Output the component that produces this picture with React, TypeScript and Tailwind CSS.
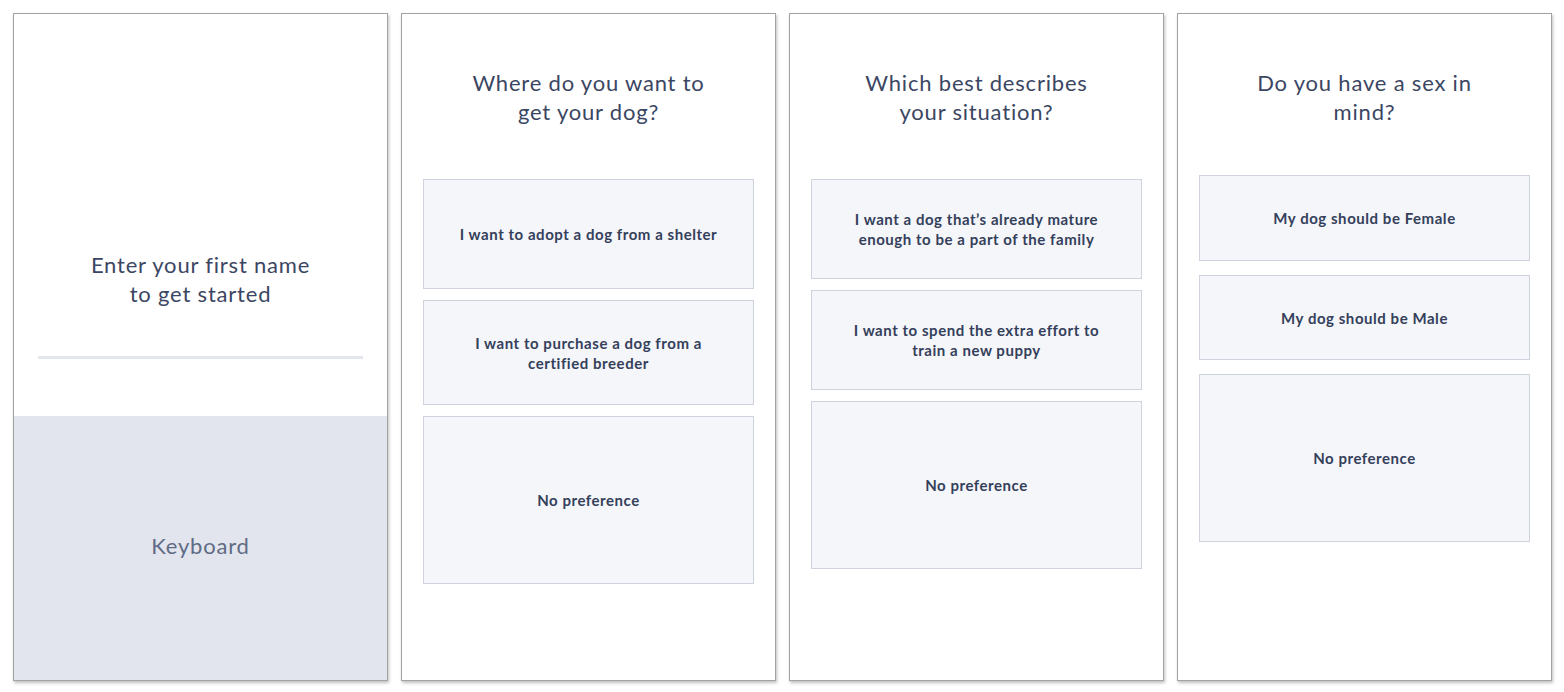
import React from 'react';

type Option = { label: React.ReactNode; h: string };

const font = { fontFamily: 'Lato, "Open Sans", sans-serif' };

function OptionBox({ label, h }: Option) {
  return (
    <div
      className={`${h} w-full flex items-center justify-center text-center bg-[#f5f6fa] border border-[#cfd3de] px-4 text-[15px] leading-[20px] tracking-[0.55px] font-bold text-[#34405a]`}
    >
      <span>{label}</span>
    </div>
  );
}

function QuestionPanel({ title, options, top, gap }: { title: React.ReactNode; options: Option[]; top: string; gap: string }) {
  return (
    <div className="w-[375px] h-[668px] bg-white border border-[#a3a3a3] shadow-[1px_2px_3px_rgba(0,0,0,0.25)] flex flex-col pt-[54px] px-[21px]">
      <h2 className="text-center text-[22px] leading-[29px] tracking-[0.8px] text-[#3b4663] font-normal">{title}</h2>
      <div className={`flex flex-col ${gap} ${top}`}>
        {options.map((o, i) => (
          <OptionBox key={i} {...o} />
        ))}
      </div>
    </div>
  );
}

export default function App() {
  return (
    <div className="min-h-screen bg-white flex gap-[13px] pl-[13px] pt-[13px]" style={font}>
      <div className="w-[375px] h-[668px] bg-white border border-[#a3a3a3] shadow-[1px_2px_3px_rgba(0,0,0,0.25)] flex flex-col">
        <div className="h-[402px] flex flex-col justify-end pb-[57px] px-[24px]">
          <h2 className="text-center text-[22px] leading-[29px] tracking-[0.8px] text-[#3b4663] font-normal mb-[48px]">
            Enter your first name
            <br />
            to get started
          </h2>
          <div className="h-[3px] bg-[#e4e6ee]" />
        </div>
        <div className="flex-1 bg-[#e2e5ed] flex items-center justify-center pb-[5px] text-[22px] tracking-[0.8px] text-[#5f6b85]">
          Keyboard
        </div>
      </div>

      <QuestionPanel
        title={<>Where do you want to<br />get your dog?</>}
        top="mt-[53px]"
        gap="gap-[11px]"
        options={[
          { label: 'I want to adopt a dog from a shelter', h: 'h-[110px]' },
          { label: <>I want to purchase a dog from a<br />certified breeder</>, h: 'h-[105px]' },
          { label: 'No preference', h: 'h-[168px]' },
        ]}
      />

      <QuestionPanel
        title={<>Which best describes<br />your situation?</>}
        top="mt-[53px]"
        gap="gap-[11px]"
        options={[
          { label: <>I want a dog that’s already mature<br />enough to be a part of the family</>, h: 'h-[100px]' },
          { label: <>I want to spend the extra effort to<br />train a new puppy</>, h: 'h-[100px]' },
          { label: 'No preference', h: 'h-[168px]' },
        ]}
      />

      <QuestionPanel
        title={<>Do you have a sex in<br />mind?</>}
        top="mt-[49px]"
        gap="gap-[14px]"
        options={[
          { label: 'My dog should be Female', h: 'h-[86px]' },
          { label: 'My dog should be Male', h: 'h-[85px]' },
          { label: 'No preference', h: 'h-[168px]' },
        ]}
      />
    </div>
  );
}
